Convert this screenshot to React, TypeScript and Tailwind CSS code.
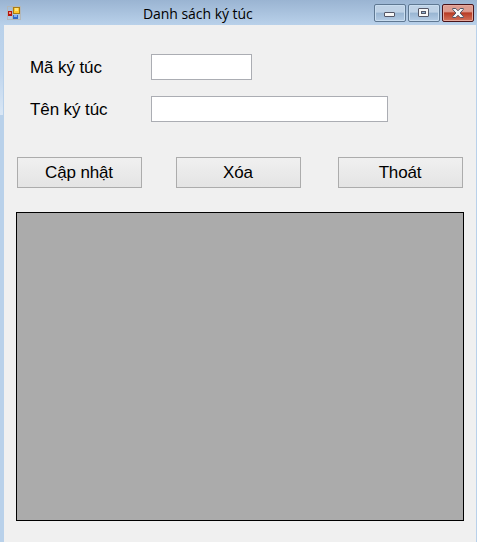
import React from "react";

function AppIcon() {
  return (
    <svg className="ml-[7px] mt-[6px] block h-[14px] w-[14px] shrink-0" viewBox="0 0 14 14" shapeRendering="crispEdges">
      <path d="M.5 .5h13v13H.5zM5.5 .5v13M.5 5.5h5M.5 9.5h5" fill="none" stroke="#b3b7b8" />
      <rect x="6" y="1" width="7" height="7" fill="#a97b12" />
      <rect x="7" y="2" width="5" height="5" fill="#ffc92f" />
      <rect x="8" y="2" width="3" height="3" fill="#ffe47a" />
      <rect x="1" y="5" width="4" height="5" fill="#b5140c" />
      <rect x="2" y="6" width="2" height="2" fill="#ef8c80" />
      <rect x="6" y="9" width="5" height="4" fill="#3168c5" />
      <rect x="7" y="9" width="3" height="2" fill="#82b0ef" />
    </svg>
  );
}

const chrome =
  "flex h-[18px] w-8 items-center justify-center rounded-[2px] border border-[#5f7892] bg-linear-to-b from-[#bfd2e6] from-45% via-[#98b5d2] via-50% to-[#b4cce5] shadow-[inset_0_0_0_1px_#c9ddf0]";

function WindowButtons() {
  return (
    <div className="mt-1 mr-[3px] ml-auto flex gap-[2px]">
      <button aria-label="Minimize" className={chrome}>
        <svg className="mt-[3px] mr-px h-[5px] w-[11px]" viewBox="0 0 11 5">
          <rect x=".5" y=".5" width="10" height="4" rx=".5" fill="#f7f7f7" stroke="#535666" />
        </svg>
      </button>
      <button aria-label="Maximize" className={chrome}>
        <svg className="mr-px mb-px h-[9px] w-[11px]" viewBox="0 0 11 9">
          <rect x=".5" y=".5" width="10" height="8" rx=".5" fill="#f7f7f7" stroke="#535666" />
          <rect x="3.5" y="3.5" width="4" height="2" fill="#91b2d2" stroke="#535666" />
        </svg>
      </button>
      <button
        aria-label="Close"
        className="flex h-[18px] w-8 items-center justify-center rounded-[2px] border border-[#491319] bg-linear-to-b from-[#dd9c90] from-40% via-[#b83b25] via-50% to-[#d4725a] shadow-[inset_0_0_0_1px_#e6a99d]"
      >
        <svg className="h-[10px] w-[12px]" viewBox="0 0 12 10">
          <path d="M.7.5h3.1L6 2.8 8.2.5h3.1v1L8.1 5l3.2 3.5v1H8.2L6 7.2 3.8 9.5H.7v-1L3.9 5 .7 1.5z" fill="#f7f7f7" stroke="#535666" />
        </svg>
      </button>
    </div>
  );
}

function Field({ label, width }: { label: string; width: string }) {
  return (
    <label className="flex h-[26px] items-center">
      <span className="w-[121px] whitespace-nowrap pt-[2px] text-[17px] leading-6 tracking-[-0.1px]">{label}</span>
      <input className={`h-[26px] border border-[#abadb3] bg-white px-1 outline-none ${width}`} />
    </label>
  );
}

function ActionButton({ children }: { children: string }) {
  return (
    <button className="h-[31px] w-[125px] border border-[#acacac] bg-linear-to-b from-[#f0f0f0] to-[#e4e4e4] pr-px text-[17px] leading-[29px] tracking-[-0.15px]">
      {children}
    </button>
  );
}

export default function App() {
  return (
    <div className="flex h-[542px] w-[477px] flex-col overflow-hidden bg-[#b9d1ea] font-['Liberation_Sans',Arial,sans-serif] text-black">
      <header className="flex h-[25px] shrink-0 items-start bg-linear-to-b from-[#9ab4d2] to-[#b9d1ea]">
        <AppIcon />
        <h1 className="ml-[122px] mt-[4px] whitespace-nowrap font-['Open_Sans','Noto_Sans',sans-serif] text-sm leading-5 tracking-[-0.05px]">
          Danh sách ký túc
        </h1>
        <WindowButtons />
      </header>
      <div className="flex min-h-0 flex-1">
        <div className="flex w-1 shrink-0 flex-col">
          <div className="h-[90px] border-r border-[#b9d1ea] bg-linear-to-b from-[#b9d1ea] via-[#bfd5ed] to-[#dae7f5]" />
        </div>
        <main className="w-[472px] bg-[#f0f0f0] pt-[29px]">
          <div className="flex flex-col gap-4 pl-[26px]">
            <Field label="Mã ký túc" width="w-[101px]" />
            <Field label="Tên ký túc" width="w-[237px]" />
          </div>
          <div className="mt-[35px] flex pl-[13px]">
            <ActionButton>Cập nhật</ActionButton>
            <div className="mr-[37px] ml-[34px]">
              <ActionButton>Xóa</ActionButton>
            </div>
            <ActionButton>Thoát</ActionButton>
          </div>
          <div className="mt-6 ml-3 h-[309px] w-[448px] border border-black bg-[#ababab]" />
        </main>
      </div>
    </div>
  );
}
